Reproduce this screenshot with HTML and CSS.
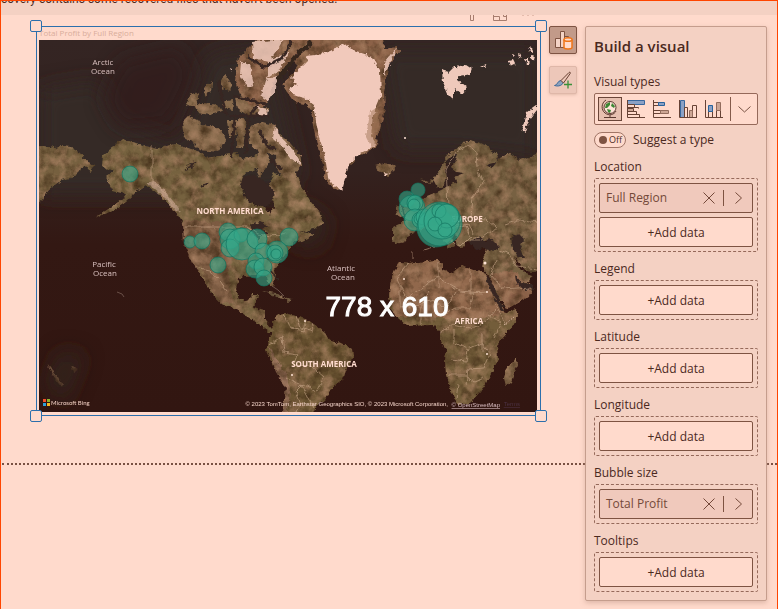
FILE: index.html
```html
<!DOCTYPE html>
<html lang="en">
<head>
<meta charset="utf-8">
<title>Build a visual</title>
<link rel="stylesheet" href="styles.css">
</head>
<body>
<div class="notice"><p>covery contains some recovered files that haven't been opened.</p></div>
<main class="workspace">
  <div class="page-break"></div>
  <section class="visual" aria-label="Total Profit by Full Region">
    <svg class="visual-actions" viewBox="0 0 66 6" aria-hidden="true">
      <path d="M1.500 0v5.500h3V0M24.500 0v5.500h13V0M24.500 1.500h6v4M34.500 0v1.500h3"/>
      <path class="dots" d="M53 .5h2M58 .5h2M63 .5h2"/>
    </svg>
    <i class="handle tl"></i><i class="handle tr"></i><i class="handle bl"></i><i class="handle br"></i>
    <h1 class="visual-title">Total Profit by Full Region</h1>
    <svg class="map" viewBox="39 40 498 372" role="img" aria-label="Map of total profit by region">
      <defs>
        <linearGradient id="sea" x1="0" y1="0" x2="0" y2="1">
          <stop offset="0" stop-color="#342523"/><stop offset=".35" stop-color="#34221f"/><stop offset=".55" stop-color="#331813"/><stop offset="1" stop-color="#321611"/>
        </linearGradient>
        <filter id="terrain" x="0" y="0" width="100%" height="100%" color-interpolation-filters="sRGB">
          <feTurbulence type="fractalNoise" baseFrequency=".2" numOctaves="3" seed="4" result="n"/>
          <feDisplacementMap in="SourceGraphic" in2="n" scale="5" xChannelSelector="R" yChannelSelector="G" result="shape"/>
          <feTurbulence type="fractalNoise" baseFrequency=".09" numOctaves="5" seed="12" result="m"/>
          <feColorMatrix in="m" values="0 0 0 0 .24  0 0 0 0 .16  0 0 0 0 .08  1.600 0 0 0 -.6" result="shade"/>
          <feColorMatrix in="m" values="0 0 0 0 .68  0 0 0 0 .52  0 0 0 0 .40  0 1.800 0 0 -.75" result="light"/>
          <feComposite in="shade" in2="shape" operator="in" result="grain"/>
          <feComposite in="light" in2="shape" operator="in" result="glow"/>
          <feMerge><feMergeNode in="shape"/><feMergeNode in="grain"/><feMergeNode in="glow"/></feMerge>
        </filter>
        <filter id="rough" x="-5%" y="-5%" width="110%" height="110%">
          <feTurbulence type="fractalNoise" baseFrequency=".25" numOctaves="3" seed="9" result="n"/>
          <feDisplacementMap in="SourceGraphic" in2="n" scale="5" xChannelSelector="R" yChannelSelector="G"/>
        </filter>
        <filter id="wander" x="-5%" y="-5%" width="110%" height="110%">
          <feTurbulence type="fractalNoise" baseFrequency=".12" numOctaves="2" seed="3" result="n"/>
          <feDisplacementMap in="SourceGraphic" in2="n" scale="6" xChannelSelector="R" yChannelSelector="G"/>
        </filter>
        <filter id="soft" x="-40%" y="-40%" width="180%" height="180%"><feGaussianBlur stdDeviation="10"/></filter>
        <clipPath id="frame"><path d="M39 40h498v372H39z"/></clipPath>
        <clipPath id="dry-africa"><path d="M380 255h165v66l-40-4-45 2-65-3z"/></clipPath>
      </defs>
      <g clip-path="url(#frame)">
        <rect x="39" y="40" width="498" height="372" fill="url(#sea)"/>
        <g filter="url(#soft)" fill="#342b28">
          <path d="M39 90l60-10 20 40 60 25 30-90 60-10 30 130-20 20H39zM380 50h157v110l-80-10-60 0z"/>
          <path d="M300 200l30 20-10 30-30-5zM60 350l25 5-20 50-20-20z" opacity=".6"/>
        </g>
        <path fill="#331d1a" opacity=".7" filter="url(#soft)" d="M120 60l60-15 15 30-25 50-50 5-18-30z"/>

        <g filter="url(#terrain)">
          <path fill="#76603f" d="M30 147l14-1 11 2 5-2 10 1 10 6 8 9 7 3-4 6-8-5-5 7-8 5-8 2-7 5-7 6-6 9-12 10z"/>
          <path fill="#76623f" d="M103 155l10-8 9-8 11 3 12 4 13 3 12-4 7-1 11 4 12 4 7 6 18-3 11-2 7 6 14-4 2 12-15 8-3 8 4 16 10 6 10 2 5 8 4-8-3-12-2-12 5-10 11 4 8 5 5-6 5 13 8 13 8 10 4 12-10 5-14 4 12-1 3 3-12 6-8 1-6 9-7 9-7 10 1 8-2 9-5-4-3-8-12 0-10 1-5 4-2 9 3 10 7 2 6-6 6 0-3 9-2 4 12 3 0 10 6 7 7 1 6-2-3 5-12 0-10-8-11-7-11-7-14-5-9-9-6-11-7-13-4-8-6-7-6-15 0-15-6-10-10-12-5-6-8-7-10-7-10 7-10 10-13 9-17 6 25-16 5-7-13-3-4-8-3-7 7-5-11-5z"/>
          <path fill="#7c5b42" d="M183 220l50 3 5 20-10 30 5 30-12 0-14-21-15-20-8-18z"/>
          <path fill="#8a6d4c" d="M197 267l4 1 10 21-4-3z"/>
          <path fill="#86694b" d="M182 122l6-6 9 4 4 5 14 2 7 3 4 10-8 12-18-2-7-7-9-6zM186 105l4-10 9-3-2 12-7 3zM195 105l8-2 15 2 4 6-12 4-12-2zM204 88l8-7-1 11-6 3zM220 80l6-5 6 10-2 6-8-3zM222 102l10-2 1 10-9-2zM227 120l11 0-2 15-7 2zM238 118l9 2-4 27-6 1zM235 98l15-3 10 10 8 3 0 7-20 1-10-8zM250 125l12-3 13 3 5 10 10 8 10 12 2 10-6 7 1 13-12-5-9-12-1-13-10-5-7 2-8-9-2-10zM258 152l8-2 4 10-10 18-4-8z"/>
          <path fill="#8c6248" d="M238 58l10-10 10-10h125l1 11 13-2 2 4-11 14-2 15-2 12 1 16-3 14-6 18 2 4-8 6-12 6-10 10-6 12-4 12-8-4-5-6-2-17-6-18-4-20-2-15-5-6-12-2-7-10-5-8 10-9 7-9-6-6-8 12-10 6-2 14-6 10-4 5-13-1-10-12-5-13z"/>
          <path fill="#806244" d="M375 165l8-2 11 2 1 5-7 6-9-4z"/>
          <path fill="#776142" d="M431 183l9-13 8-15 12-10 10-5 15 5 13 10-1 7-12 3 7 3 8-10 10-5 10 7 22-8v110l-7 10-9-1-12-15 4 10 8 8 6 2-6 10-8 5-18 10-11-24-8-11 4-14 3-11-12 2-11-1 0 4-6 1-4-6 2-6-6-2-4 2 5 4 3 6-6 3-3-5-8-7-6-5-7-3-7 2-8 4-6 8-8 2-3-4 0-13 16-8-4-9 2-4 12-5 8-5 10-4 12-6 7-4-2-5 10-4-8-1-5-4 5-8 2-6-6 1-6 6-1 9 2 8-5 10-5-1-4-8-6 4-7-4z"/>
          <path fill="#735d3a" d="M391 280l8-18 12 1 27-3 5 5-2 4 11 4 9-7 12 4 12 3 6 11 14 29 11-4 2 8-10 15-11 13 1 15-6 12-4 8-8 12-10 11-11 2-5-7-4-10-4-13-1-15 2-10-7-10 0-8-7-7-26 1-9-8-8-10-1-13z"/>
          <path clip-path="url(#dry-africa)" fill="#95694f" opacity=".9" d="M391 280l8-18 12 1 27-3 5 5-2 4 11 4 9-7 12 4 12 3 6 11 14 29-18 5-97 1-1-24zM490 274l22-4 20 17-3 9-22 13-16-26z"/>
          <path fill="#84684a" d="M516 358l1 7-6 17-5 4-2-8 3-10 6-6z"/>
          <path fill="#6c5633" d="M275 320l3-5 6-2 12 3 12 4 10 7 8 6 4 7 13 4 10 6 1 8-8 12-3 10-11 8-7 12-9 5-3 10-30 0 3-15 0-15-10-15-10-20 2-10 5-7-1-11z"/>
          <path fill="#946e58" d="M268 345l5 8 12 20 5 15-2 24h-6l4-24-10-16z"/>
          <path fill="#766044" d="M404 207l8-8 5 10 3 13-12 3zM396 208l6-4 2 10-7 3z"/>
          <path fill="#6f5c42" d="M262 291l14 2 9 5-8-1zM283 297l9 2-3 3z"/>
          <path fill="#58402f" opacity=".6" d="M47 363l6 8 10 14-1 3-10-13zM71 366l7 3-5 3z"/>
        </g>

        <g filter="url(#rough)" fill="#efc9bb">
          <path fill="none" stroke="#34251f" stroke-width="4" d="M312 42l-12 10-10 12-12 14-6 14"/>
          <path fill="#f1c9bb" d="M306 56l18-2 20-10 12 8 16 5 8 13 1 26-8 20-2 20 5 9-15 8-12 11-7 27-9-6-5-8-3-21-6-18-6-34-8-6-12-3-4-6 8-5-6-6 9-10 8-8z"/>
          <path opacity=".85" d="M252 42l32-3-5 9-10 14-16-4zM241 62l9 3 4 20-7 2-7-13zM268 60l22-8-11 18-11 8zM265 80l12-4-1 14-8 11-7-5zM258 107l10 2-1 6-8-1zM384 62l12-14-4 12-8 16zM275 126l5 10 13 14 9 15-9-4-10-14-10-9z"/>
          <path d="M442 70l7 2 6-6 8 7-6 7 10 8-5 6-7-6-2 11-5-5-5-12zM457 67l9-3 6 4-2 6-10 2zM481 66l4-2 1 3zM527 112l10-7v5l-8 10-4 12-3-2z"/>
          <path d="M509 61l4-1 2 4-4 2zM518 54l4 1-2 3zM528 47l4 1 2 4-4 0zM524 58l4 0 2 6-3 0zM531 55l3 1-1 4-2-1zM512 54l3 1-2 2zM383 172l5 1-3 3zM229 68l3 1-1 3z"/>
          <path opacity=".4" d="M145 183l9-2 9 8 10 12 8 12-6-3-10-12-12-10z"/>
          <path opacity=".5" fill="#9f7657" d="M370 112l9-6-1 14 2 8-7 6 6 9-8 4-5-10z"/>
        </g>

        <g fill="#372722" filter="url(#rough)">
          <path d="M470 242l8-6 6 4 8-1 8 8-6 3-10-2-9 2zM511 237l8-3 5 5-4 8 4 11-6 0-5-9zM240 185l4-10 12 1 10 6 8 10-3 12-10 3-12-6zM250 225l10-3 9 4-7 3 7 6-8 0-3 7-4-7zM515 275l6 7 12 3 2 4-11 1-8-8zM485 275l5 5 9 18 6 14-5-3-9-18z"/>
          <path fill="none" stroke="#372722" stroke-width="3" d="M248 57l16 10 18-9 10-18M233 96l32 8M230 116h40M235 118l-4 40M248 118l-2 36M218 80l8 35M258 105l-10 12M259 130l8 16 10 4M270 160l12 10"/>
          <path fill="none" stroke="#372722" stroke-width="1.500" d="M201 187l9-5M186 166l8-3 -3 5 -6 1M270 270l8 10"/>
        </g>

        <g class="borders" filter="url(#wander)">
          <path d="M152 147v36l13 9 6 11M184 227h64l10 7 14 2 14-3M195 267l14 3 10 11 8 10M448 205l-2-35 10-19 12-5 8 6 1 16 6 15-10 14-2 20M466 217l20 2 10 9-16 12-10 0M449 228l20-4 4 10-12 12-10-6M424 250l10-3M412 252l0 7M454 212l0 12 12 2 4 12 10-2M498 250l12 4 6 12 21 3M495 259l-4 16 12 14 28-2M505 225l15-5 17 3M408 264l-12 15 12 18 30-20 22 14 22 2M438 262l0 26M470 271v22l18-1M400 285v22l20-2 10-14M421 325v-22l20-4M432 300l14 8 10-17M444 315l12-7 14 0 4-16M440 333l12-8 20 4 14-8 10-12M454 330v12l14 8-2 12-16-2M468 350l14-6 8 10-6 14-16 1-2 16M447 375l18 0 9 7 10-4M456 400l2-16M482 334v18M487 315l14 8-8 14M495 304l12 20M284 314l6 14 13 3 3-13M268 344l14-6 2 14 13 2-3 12 16-1 14 12-7 14-14-8-8 8 5 14-8 12M296 316l4 12 14 4M312 322l2 9M286 378l16 8 11 22"/>
        </g>
        <g fill="#ffe4d6"><circle cx="485" cy="263" r="1.500"/><circle cx="487" cy="292" r="1"/><circle cx="305" cy="321" r="1"/><circle cx="404" cy="279" r="1"/><circle cx="292" cy="375" r="1"/><circle cx="487" cy="354" r="1"/><circle cx="405" cy="138" r="1"/></g>
        <path d="M504 325l10-8" stroke="#efcabb" stroke-dasharray="1 2"/>
        <path d="M117 292l5 2 2 3M272 286l6 4 6 6" stroke="#6a5048" fill="none"/>

        <g class="place sea-name">
          <text x="103" y="65">Arctic</text><text x="103" y="74">Ocean</text>
          <text x="104" y="267">Pacific</text><text x="105" y="276">Ocean</text>
          <text x="341" y="271">Atlantic</text><text x="343" y="280">Ocean</text>
        </g>
        <g class="place land-name">
          <text x="230" y="214">NORTH AMERICA</text><text x="324" y="367">SOUTH AMERICA</text>
          <text x="467" y="222">EUROPE</text><text x="469" y="324">AFRICA</text>
        </g>
        <g class="bubbles">
          <circle cx="130" cy="174" r="8"/><circle cx="190" cy="242" r="6"/><circle cx="202" cy="241" r="8"/><circle cx="228" cy="232" r="9"/><circle cx="230" cy="239" r="10"/><circle cx="230" cy="248" r="9"/><circle cx="241" cy="235" r="7"/><circle cx="242" cy="244" r="16"/><circle cx="257" cy="239" r="10"/><circle cx="289" cy="237" r="9"/><circle cx="277" cy="252" r="11"/><circle cx="263" cy="251" r="8"/><circle cx="275" cy="253" r="8"/><circle cx="276" cy="254" r="5"/><circle cx="218" cy="265" r="8"/><circle cx="256" cy="261" r="8"/><circle cx="255" cy="269" r="9"/><circle cx="263" cy="267" r="9"/><circle cx="264" cy="278" r="8"/>
          <circle cx="418" cy="190" r="7"/><circle cx="407" cy="199" r="8"/><circle cx="412" cy="208" r="13"/><circle cx="415" cy="203" r="8"/><circle cx="414" cy="205" r="6"/><circle cx="415" cy="220" r="11"/><circle cx="420" cy="220" r="8"/><circle cx="420" cy="219" r="6"/><circle cx="424" cy="217" r="8"/><circle cx="436" cy="228" r="19"/><circle cx="440" cy="224" r="22"/><circle cx="442" cy="221" r="18"/><circle cx="439" cy="211" r="7"/><circle cx="447" cy="216" r="12"/><circle cx="435" cy="224" r="7"/><circle cx="445" cy="230" r="7"/>
        </g>
        <text class="size-label" x="387" y="316">778 x 610</text>
        <path fill="#f0502a" d="M43 399h3v3h-3z"/><path fill="#8bb32c" d="M47 399h3v3h-3z"/><path fill="#2f9fd8" d="M43 403h3v3h-3z"/><path fill="#f5b520" d="M47 403h3v3h-3z"/>
        <text class="brand" x="51" y="405">Microsoft Bing</text>
        <text class="credit" x="448" y="406">© 2023 TomTom, Earthstar Geographics SIO, © 2023 Microsoft Corporation,</text>
        <a href="#osm"><text class="credit link" x="500" y="407">© OpenStreetMap</text></a>
        <a href="#terms"><text class="credit terms" x="520" y="406">Terms</text></a>
      </g>
    </svg>
  </section>

  <nav class="tools" aria-label="Visual tools">
    <button class="tool active" aria-label="Build a visual">
      <svg viewBox="0 0 28 28"><path fill="#f4d3c6" stroke="#7e5342" d="M6.500 12.500h5v9h-5zM11.500 5.500h4v16h-4zM15.500 10.500h4v11h-4z"/><path fill="#ffdacc" stroke="#ef7417" stroke-width="1.500" d="M15 13.500v8c0 1 2 1.500 4 1.500s4-.5 4-1.500v-8"/><ellipse cx="19" cy="13.500" rx="4" ry="1.800" fill="#ffdacc" stroke="#ef7417" stroke-width="1.500"/></svg>
    </button>
    <button class="tool" aria-label="Format visual">
      <svg viewBox="0 0 28 28"><path fill="#8da2bd" stroke="#3d6b9b" d="M5.500 19.500c3 0 3-5 6.500-5 2 0 3 2 1.500 3.500-2 2-5 2.500-8 1.500z"/><path fill="#edc6b8" stroke="#674032" d="M12 14.500l8-8c1-.7 1.700 0 1.200 1L14.500 17z"/><path stroke="#399039" stroke-width="1.300" d="M15 18.500h8M19 14.500v8"/></svg>
    </button>
  </nav>

  <aside class="panel">
    <h2>Build a visual</h2>
    <h3>Visual types</h3>
    <div class="types">
      <button class="type selected" aria-label="Map"><svg viewBox="0 0 24 24"><circle cx="12" cy="10.500" r="6" fill="#ffe4d8" stroke="#5b392f"/><path fill="#3c8733" d="M8 7l4-2 0 3-3 3-2 0zM14 6l3 3-1 2-3-2zM9 12l4 1-1 3-2-1z"/><path stroke="#5b392f" fill="none" d="M8 3C3 6 3 13 7 16c4 3 9 2 11-2M12 18v3M6 20.500h12"/></svg></button>
      <button class="type" aria-label="Stacked bar chart"><svg viewBox="0 0 24 24"><path fill="#8ba0c4" stroke="#39679d" d="M3.500 3.500h17v4h-17z"/><path fill="#ffdacc" stroke="#674235" d="M3.500 7.500h7v3h-7zM3.500 14.500h9v3h-9z"/><path fill="#cda695" stroke="#674235" d="M3.500 11.500h6v3h-6z"/><path stroke="#674235" fill="none" d="M3.500 3v17.500H21M3.500 10.500h11v1M3.500 17.500h12v3"/></svg></button>
      <button class="type" aria-label="Clustered bar chart"><svg viewBox="0 0 24 24"><path fill="#ffdacc" stroke="#674235" d="M3.500 5.500h5v3h-5zM3.500 13.500h7v3h-7z"/><path fill="#8ba0c4" stroke="#28639b" d="M8.500 5.500h6v3h-6z"/><path fill="#cda695" stroke="#936c5d" d="M10.500 13.500h8v3h-8z"/><path stroke="#674235" fill="none" d="M3.500 3v17.500H21"/></svg></button>
      <button class="type" aria-label="Column chart"><svg viewBox="0 0 24 24"><path fill="#8ba0c4" stroke="#39679d" d="M4.500 3.500h4v17h-4z"/><path fill="#ffdacc" stroke="#674235" d="M8.500 10.500h3v10h-3zM16.500 8.500h4v12h-4z"/><path fill="#cda695" stroke="#936c5d" d="M13.500 13.500h3v7h-3z"/><path stroke="#674235" fill="none" d="M3.500 3v17.500H21"/></svg></button>
      <button class="type" aria-label="Stacked column chart"><svg viewBox="0 0 24 24"><path fill="#ffdacc" stroke="#674235" d="M6.500 14.500h4v6h-4zM14.500 13.500h4v7h-4z"/><path fill="#8ba0c4" stroke="#28639b" d="M6.500 8.500h4v6h-4z"/><path fill="#cda695" stroke="#936c5d" d="M14.500 5.500h4v8h-4z"/><path stroke="#674235" fill="none" d="M3.500 3v17.500H21"/></svg></button>
      <span class="rule"></span>
      <button class="more" aria-label="More visual types"><svg viewBox="0 0 20 24"><path fill="none" stroke="#795344" d="M4.500 9.500l6 5.500 6-5.500"/></svg></button>
    </div>
    <div class="suggest"><button class="toggle" role="switch" aria-checked="false" aria-labelledby="suggest-label"><i></i>Off</button><span id="suggest-label">Suggest a type</span></div>

    <h3>Location</h3>
    <div class="well">
      <div class="chip"><span>Full Region</span><button aria-label="Remove Full Region"><svg viewBox="0 0 14 14"><path d="M1.500 1.500l11 11M12.500 1.500l-11 11"/></svg></button><i></i><button aria-label="Full Region options"><svg viewBox="0 0 14 14"><path d="M4.500 1.500l6 5.500-6 5.500"/></svg></button></div>
      <button class="add">+Add data</button>
    </div>
    <h3>Legend</h3>
    <div class="well"><button class="add">+Add data</button></div>
    <h3>Latitude</h3>
    <div class="well"><button class="add">+Add data</button></div>
    <h3>Longitude</h3>
    <div class="well"><button class="add">+Add data</button></div>
    <h3>Bubble size</h3>
    <div class="well">
      <div class="chip"><span>Total Profit</span><button aria-label="Remove Total Profit"><svg viewBox="0 0 14 14"><path d="M1.500 1.500l11 11M12.500 1.500l-11 11"/></svg></button><i></i><button aria-label="Total Profit options"><svg viewBox="0 0 14 14"><path d="M4.500 1.500l6 5.500-6 5.500"/></svg></button></div>
    </div>
    <h3>Tooltips</h3>
    <div class="well"><button class="add">+Add data</button></div>
  </aside>
</main>
</body>
</html>
```
FILE: styles.css
```css
* { box-sizing: border-box; }

body {
  margin: 0;
  min-height: 100vh;
  border: 1px solid #ff4500;
  border-bottom: 0;
  background: #ffdacc;
  color: #4b291e;
  font: 12px/18px "Open Sans", "Noto Sans", sans-serif;
}

h1, h2, h3, p { margin: 0; }
button { margin: 0; padding: 0; font: inherit; color: inherit; background: none; border: 0; }
svg { display: block; }

.notice { height: 14px; overflow: hidden; background: #f4d1c3; }
.notice p { margin-top: -11px; font-family: Roboto, sans-serif; white-space: nowrap; }

.workspace {
  position: relative;
  display: flex;
  align-items: flex-start;
  gap: 8px;
  padding: 11px 10px 8px 35px;
}

.page-break {
  position: absolute;
  left: 1px;
  right: 0;
  top: 448px;
  border-top: 2px dotted #795042;
}

.visual {
  position: relative;
  flex: 1;
  min-width: 0;
  border: 1px solid #2c6fac;
  padding: 0 3px 3px 2px;
}
.visual-title {
  height: 13px;
  font-size: 8px;
  line-height: 12px;
  font-weight: 400;
  color: #d9ad9b;
}
.visual-actions { position: absolute; top: -12px; right: 5px; width: 66px; height: 6px; fill: none; stroke: #a77d6e; }
.visual-actions .dots { stroke: #e5bcad; }
.map { width: 100%; height: auto; }

.handle {
  position: absolute;
  z-index: 1;
  width: 12px;
  height: 12px;
  border: 1px solid #2c6fac;
  border-radius: 2px;
  background: #ffdacc;
}
.tl { left: -7px; top: -7px; }
.tr { right: -7px; top: -7px; }
.bl { left: -7px; bottom: -7px; }
.br { right: -7px; bottom: -7px; }

.borders { fill: none; stroke: #c9a78a; stroke-width: 1; opacity: .6; }
.place { font-size: 8px; text-anchor: middle; }
.sea-name { fill: #d9c0bf; font-weight: 500; }
.land-name { fill: #ffdccf; font-weight: 700; }
.bubbles { fill: #33a98b; fill-opacity: .6; stroke: #147460; stroke-opacity: .7; }
.size-label {
  font: 28px "Liberation Sans", sans-serif;
  fill: #fff;
  stroke: #fff;
  stroke-width: 1px;
  text-anchor: middle;
}
.brand { font: 6px Lato, sans-serif; fill: #f0cdc1; }
.credit { font: 6px "Liberation Sans", sans-serif; fill: #f3d3c8; text-anchor: end; }
.link { text-decoration: underline; fill: #d8bcc0; }
.terms { fill: #4b3142; text-decoration: underline; }

.tools { display: flex; flex-direction: column; gap: 12px; }
.tool {
  width: 28px;
  height: 28px;
  background: #edc7b9;
  border: 1px solid #dfb7a8;
  border-radius: 2px;
  box-shadow: 0 1px 3px #c99f8f88;
}
.tool svg { width: 28px; height: 28px; margin: -1px; fill: none; }
.tool.active { background: #c29a89; border-color: #7e5342; }

.panel {
  position: relative;
  width: 182px;
  padding: 8px;
  border: 1px solid #c59d8d;
  border-radius: 2px;
  background: #f4d1c3;
  box-shadow: 0 2px 5px #bd938480;
}
h2 { margin-bottom: 8px; font-size: 15px; line-height: 22px; font-weight: 600; }
h3 { padding: 8px 0 2px; font-size: 12px; line-height: 18px; font-weight: 400; }

.types {
  display: flex;
  align-items: center;
  gap: 2px;
  height: 32px;
  padding: 0 3px;
  border: 1px solid #95695a;
  border-radius: 2px;
  background: #ffdacc;
}
.type { flex: none; width: 24px; height: 24px; }
.type svg { width: 24px; height: 24px; }
.type.selected { background: #e7c0b0; border: 1px solid #6a4538; }
.type.selected svg { margin: -1px; }
.rule { flex: none; width: 1px; height: 24px; margin: 0 1px 0 2px; background: #855b4b; }
.more { flex: none; }
.more svg { width: 20px; height: 24px; }

.suggest { display: flex; align-items: center; gap: 7px; height: 16px; margin: 7px 0 2px; }
.toggle {
  display: flex;
  align-items: center;
  gap: 2px;
  width: 32px;
  height: 16px;
  padding-left: 4px;
  border: 1px solid #a07566;
  border-radius: 8px;
  background: #ffdacc;
  font-size: 9px;
  line-height: 14px;
}
.toggle i { width: 8px; height: 8px; border-radius: 50%; background: #7e5342; }

.well {
  display: grid;
  gap: 4px;
  padding: 4px;
  border: 1px dashed #95695a;
  border-radius: 2px;
}
.add, .chip { height: 30px; border: 1px solid #7e5342; border-radius: 2px; }
.add { padding-top: 1px; background: #ffdacc; }
.chip {
  display: flex;
  align-items: center;
  padding: 0 7px 0 6px;
  background: #f0c9bc;
  color: #74493a;
}
.chip span { flex: 1; }
.chip i { width: 1px; height: 16px; margin: 0 7px; background: #7e5342; }
.chip svg { width: 14px; height: 14px; fill: none; stroke: #74493a; }
```
